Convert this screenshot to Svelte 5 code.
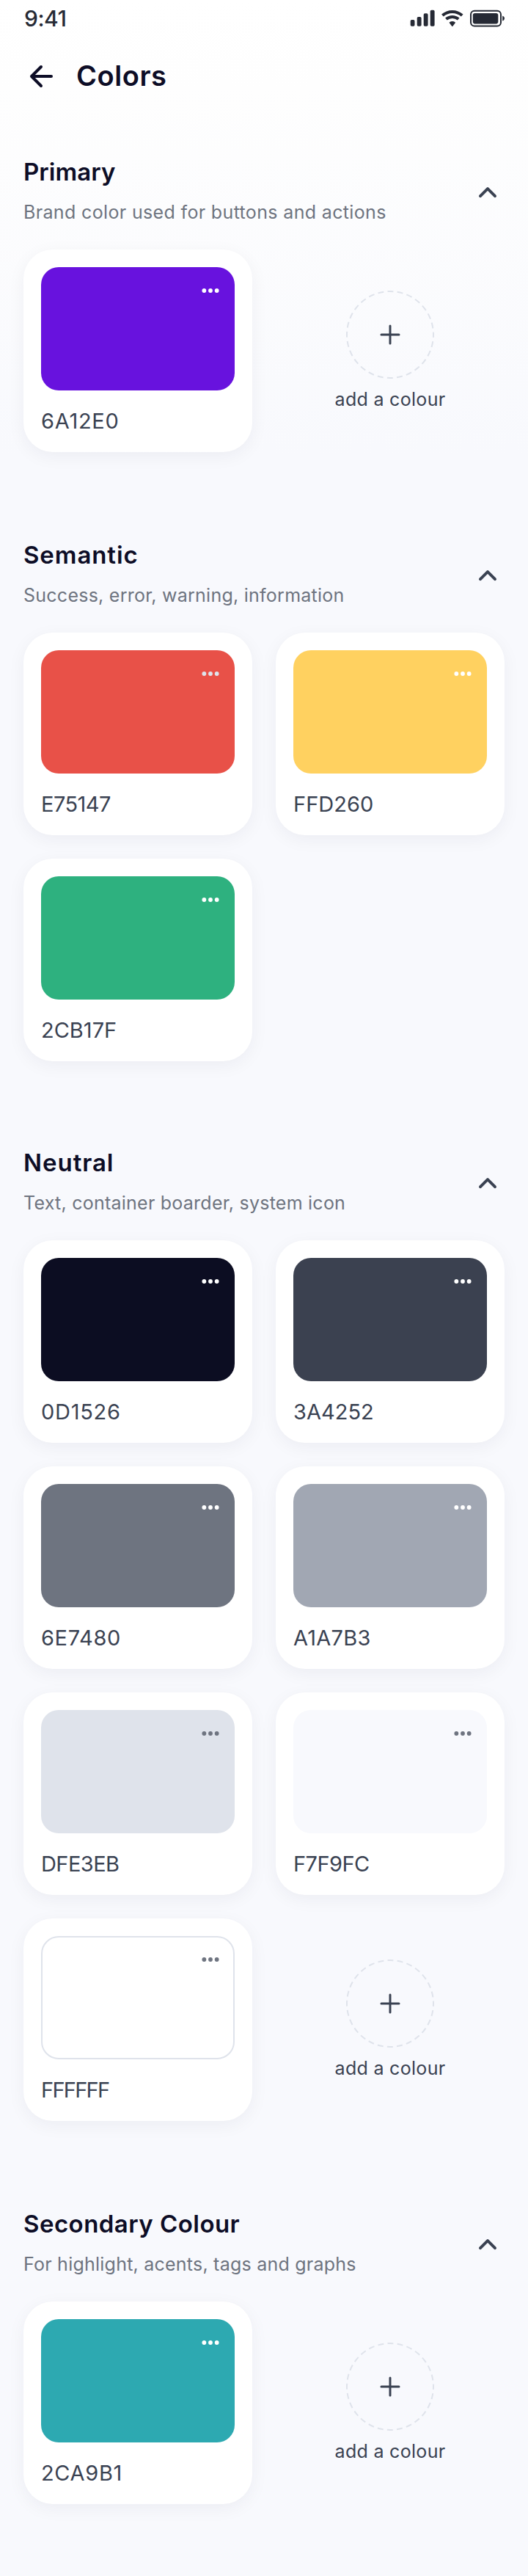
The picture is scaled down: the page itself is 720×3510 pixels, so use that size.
<script>
  const sections = [
    {
      title: 'Primary',
      titleSpacing: 0.07,
      note: 'Brand color used for buttons and actions',
      noteSpacing: 0.35,
      colors: [{ hex: '6A12E0', fill: '#6812de', spacing: 0.71 }],
      add: true
    },
    {
      title: 'Semantic',
      titleSpacing: 0.9,
      note: 'Success, error, warning, information',
      noteSpacing: 0.25,
      colors: [
        { hex: 'E75147', fill: '#e85148', dots: '#dfe3eb', spacing: -0.54 },
        { hex: 'FFD260', fill: '#ffd160', spacing: 0.03 },
        { hex: '2CB17F', fill: '#2eb17f', spacing: 0 }
      ],
      add: false,
      tight: true
    },
    {
      title: 'Neutral',
      titleSpacing: 0.95,
      note: 'Text, container boarder, system icon',
      noteSpacing: 0.24,
      colors: [
        { hex: '0D1526', fill: '#0c0d22', spacing: 0.73 },
        { hex: '3A4252', fill: '#3b4150', spacing: 0.01 },
        { hex: '6E7480', fill: '#6e7480', spacing: 0.64 },
        { hex: 'A1A7B3', fill: '#a1a7b3', spacing: 0.26 },
        { hex: 'DFE3EB', fill: '#dfe3eb', dots: '#6e7480', spacing: -0.56 },
        { hex: 'F7F9FC', fill: '#f8f9fd', dots: '#6e7480', spacing: -0.55 },
        { hex: 'FFFFFF', fill: '#ffffff', dots: '#6e7480', outlined: true, spacing: -1.72 }
      ],
      add: true
    },
    {
      title: 'Secondary Colour',
      titleSpacing: 0.46,
      note: 'For highlight, acents, tags and graphs',
      noteSpacing: 0.23,
      colors: [{ hex: '2CA9B1', fill: '#2da9b1', spacing: 0.65 }],
      add: true
    }
  ];
</script>

<main>
  <div class="status">
    <span class="time">9:41</span>
    <svg width="130" height="24" viewBox="0 0 130 24" fill="#262a35" aria-hidden="true">
      <rect x="1.7" y="14" width="5.8" height="8.7" rx="1.8" />
      <rect x="10.7" y="10" width="5.9" height="12.7" rx="1.8" />
      <rect x="19.7" y="5.2" width="5.9" height="17.5" rx="1.8" />
      <rect x="28.7" y="0.8" width="5.9" height="21.9" rx="1.8" />
      <g fill="none" stroke="#262a35" stroke-width="4">
        <path d="M45.4 8.1A20 20 0 0 1 72.2 8.1" />
        <path d="M50.4 13A13 13 0 0 1 67.2 13" />
      </g>
      <path d="M58.8 22.2L55.4 17.9A5.8 5.8 0 0 1 62.2 17.9Z" stroke="#262a35" stroke-width="1.4" stroke-linejoin="round" />
      <rect x="84" y="1.8" width="41" height="20.6" rx="5" fill="none" stroke="#262a35" stroke-width="2" />
      <rect x="86.8" y="5" width="34.5" height="14.4" rx="2.8" />
      <path d="M127.2 8.4C129.2 9.2 130 10.4 130 12S129.2 14.8 127.2 15.6Z" />
    </svg>
  </div>

  <header>
    <svg width="36" height="32" viewBox="0 0 36 32" fill="none" stroke="#0d0d26" stroke-width="4" stroke-linecap="round" stroke-linejoin="round" aria-hidden="true">
      <path d="M34 16H7M20 3L7 16L20 29" />
    </svg>
    <h1>Colors</h1>
  </header>

  {#each sections as section}
    <section class:tight={section.tight}>
      <div class="head">
        <div>
          <h2 style="letter-spacing: {section.titleSpacing}px">{section.title}</h2>
          <p style="letter-spacing: {section.noteSpacing}px">{section.note}</p>
        </div>
        <svg width="28" height="20" viewBox="0 0 28 20" fill="none" stroke="#3a4252" stroke-width="4" stroke-linecap="round" stroke-linejoin="round" aria-hidden="true">
          <path d="M4 15.2L14 5.2L24 15.2" />
        </svg>
      </div>
      <div class="grid">
        {#each section.colors as color}
          <article>
            <div class="swatch" class:outlined={color.outlined} style="background: {color.fill}; color: {color.dots ?? '#ffffff'}">
              <svg width="24" height="8" viewBox="0 0 24 8" fill="currentColor" aria-hidden="true">
                <circle cx="3.35" cy="4" r="2.9" />
                <circle cx="12" cy="4" r="2.9" />
                <circle cx="20.65" cy="4" r="2.9" />
              </svg>
            </div>
            <span class="hex" style="letter-spacing: {color.spacing}px">{color.hex}</span>
          </article>
        {/each}
        {#if section.add}
          <div class="add">
            <svg width="120" height="120" viewBox="0 0 120 120" fill="none" aria-hidden="true">
              <circle cx="60" cy="60" r="59" stroke="#dfe3eb" stroke-width="2" stroke-dasharray="8 5.2396" stroke-dashoffset="4" />
              <path d="M48 60H72M60 48V72" stroke="#3a4252" stroke-width="3" stroke-linecap="round" />
            </svg>
            <span>add a colour</span>
          </div>
        {/if}
      </div>
    </section>
  {/each}
</main>

<style>
  :global(body) {
    background: #f8f9fd;
  }
  main {
    box-sizing: border-box;
    width: 720px;
    height: 3510px;
    padding: 0 32px;
    background: linear-gradient(180deg, #ffffff 0, #fefefe 120px, #f8f9fd 620px);
    font-family: Inter, 'Liberation Sans', sans-serif;
    color: #3a4252;
  }
  .status {
    display: flex;
    align-items: center;
    justify-content: space-between;
    height: 50px;
  }
  .time {
    font-size: 30px;
    line-height: 36px;
    font-weight: 500;
    letter-spacing: -0.47px;
    color: #262a35;
    padding-left: 1px;
  }
  header {
    display: flex;
    align-items: center;
    gap: 32px;
    height: 48px;
    margin: 30px 0 86px;
    padding-left: 4px;
  }
  h1, h2, p {
    margin: 0;
  }
  h1 {
    font-size: 38px;
    line-height: 46px;
    padding-bottom: 2px;
    font-weight: 600;
    letter-spacing: 0.54px;
    color: #0d0d26;
  }
  section {
    margin-bottom: 120px;
  }
  section.tight {
    margin-bottom: 118px;
  }
  .head {
    display: flex;
    align-items: center;
    justify-content: space-between;
    height: 96px;
    margin-bottom: 30px;
    padding-right: 9px;
  }
  .head div {
    display: flex;
    flex-direction: column;
    gap: 19px;
    height: 96px;
  }
  h2 {
    font-size: 33px;
    line-height: 40px;
    font-weight: 600;
    color: #0d0d26;
  }
  p {
    font-size: 25px;
    line-height: 32px;
    color: #6e7480;
  }
  .grid {
    display: grid;
    grid-template-columns: 312px 312px;
    gap: 32px;
  }
  article {
    display: flex;
    flex-direction: column;
    gap: 24px;
    padding: 24px;
    border-radius: 40px;
    background: #ffffff;
    box-shadow: 0 6px 24px rgba(20, 20, 60, 0.05);
  }
  .swatch {
    box-sizing: border-box;
    display: flex;
    justify-content: flex-end;
    align-items: flex-start;
    height: 168px;
    padding: 28px 21px 0 0;
    border-radius: 24px;
  }
  .swatch.outlined {
    border: 2px solid #dfe3eb;
    padding: 26px 19px 0 0;
  }
  .hex {
    font-size: 29px;
    line-height: 36px;
  }
  .add {
    display: flex;
    flex-direction: column;
    align-items: center;
    justify-content: center;
    gap: 12px;
  }
  .add span {
    font-size: 25px;
    line-height: 32px;
    letter-spacing: 0.3px;
  }
</style>
